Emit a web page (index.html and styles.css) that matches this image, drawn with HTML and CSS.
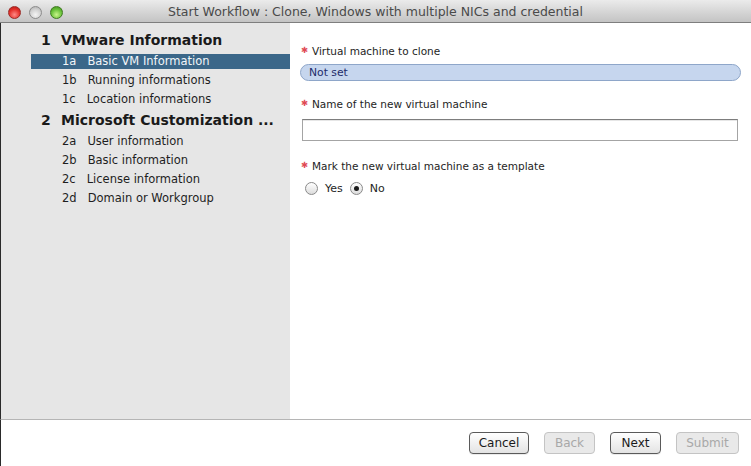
FILE: index.html
```html
<!DOCTYPE html>
<html>
<head>
<meta charset="utf-8">
<link rel="stylesheet" href="styles.css">
</head>
<body>
<div class="window">
  <div class="titlebar">
    <div class="lights">
      <span class="light red"></span>
      <span class="light gray"></span>
      <span class="light green"></span>
    </div>
    <div class="title">Start Workflow : Clone, Windows with multiple NICs and credential</div>
  </div>
  <div class="main">
    <div class="sidebar">
      <div class="steps">
        <div class="step"><span class="snum">1</span>VMware Information</div>
        <div class="sub selected"><span class="num">1a</span>Basic VM Information</div>
        <div class="sub"><span class="num">1b</span>Running informations</div>
        <div class="sub"><span class="num">1c</span>Location informations</div>
        <div class="step"><span class="snum">2</span>Microsoft Customization ...</div>
        <div class="sub"><span class="num">2a</span>User information</div>
        <div class="sub"><span class="num">2b</span>Basic information</div>
        <div class="sub"><span class="num">2c</span>License information</div>
        <div class="sub"><span class="num">2d</span>Domain or Workgroup</div>
      </div>
    </div>
    <div class="content">
      <div class="label"><span class="req">✱</span>Virtual machine to clone</div>
      <div class="pill">Not set</div>
      <div class="label l2"><span class="req">✱</span>Name of the new virtual machine</div>
      <div class="input"></div>
      <div class="label l3"><span class="req">✱</span>Mark the new virtual machine as a template</div>
      <div class="radios">
        <span class="radio"></span><span class="rlabel">Yes</span>
        <span class="radio checked"></span><span class="rlabel">No</span>
      </div>
    </div>
  </div>
  <div class="footer">
    <button class="btn cancel">Cancel</button>
    <button class="btn back disabled">Back</button>
    <button class="btn next">Next</button>
    <button class="btn submit disabled">Submit</button>
  </div>
</div>
</body>
</html>
```

FILE: styles.css
```css
html, body {
  margin: 0;
  padding: 0;
  background: #ffffff;
}
body {
  font-family: "DejaVu Sans", "Liberation Sans", sans-serif;
  color: #1e1e1e;
}
.window {
  width: 751px;
  height: 466px;
  display: flex;
  flex-direction: column;
  overflow: hidden;
}
.titlebar {
  height: 22px;
  flex: none;
  position: relative;
  background: linear-gradient(#ebebeb, #d3d3d3 60%, #c4c4c4);
  border-bottom: 1px solid #7e7e7e;
  display: flex;
  align-items: center;
}
.lights {
  display: flex;
  gap: 8px;
  padding-left: 8px;
  padding-top: 2px;
}
.light {
  width: 13px;
  height: 13px;
  border-radius: 50%;
  box-sizing: border-box;
}
.light.red {
  background: radial-gradient(circle at 50% 70%, #ff8b86 0%, #e5322c 55%, #b0150f 100%);
  border: 1px solid #9c2a26;
}
.light.gray {
  background: radial-gradient(circle at 50% 70%, #f4f4f4 0%, #d2d2d2 55%, #a9a9a9 100%);
  border: 1px solid #8c8c8c;
}
.light.green {
  background: radial-gradient(circle at 50% 70%, #c9f58a 0%, #6ac23b 55%, #3b8a17 100%);
  border: 1px solid #3f7b21;
}
.title {
  position: absolute;
  left: 0;
  right: 0;
  top: 0;
  height: 22px;
  line-height: 24px;
  text-align: center;
  font-size: 12.5px;
  color: #4a4a4a;
  pointer-events: none;
}
.main {
  flex: 1;
  display: flex;
  min-height: 0;
}
.sidebar {
  width: 289px;
  flex: none;
  background: #e6e6e6;
  border-left: 1px solid #2a2a2a;
  padding-top: 8px;
  box-sizing: content-box;
}
.steps {
  margin-left: 30px;
}
.step {
  height: 19px;
  line-height: 19px;
  padding-left: 10px;
  font-size: 14px;
  font-weight: bold;
  color: #1a1a1a;
  white-space: nowrap;
  margin-top: 4px;
}
.step:first-child {
  margin-top: 0;
}
.snum {
  display: inline-block;
  width: 20px;
}
.sub {
  height: 15px;
  line-height: 15px;
  margin-top: 4px;
  padding-left: 31px;
  font-size: 11.5px;
  color: #1e1e1e;
  white-space: nowrap;
}
.sub .num {
  margin-right: 11px;
}
.sub.selected {
  background: #3b6789;
  color: #f2f5f8;
}
.content {
  flex: 1;
  padding: 21px 10px 0 10px;
  background: #ffffff;
}
.label {
  height: 14px;
  line-height: 14px;
  font-size: 10.5px;
  color: #1e1e1e;
  white-space: nowrap;
  display: flex;
  align-items: center;
}
.req {
  color: #e04a55;
  font-size: 8.5px;
  width: 8px;
  margin-right: 3px;
  margin-left: 1px;
  position: relative;
  top: -1px;
}
.pill {
  margin-top: 6px;
  height: 17px;
  box-sizing: border-box;
  border: 1px solid #8ea6c9;
  border-radius: 9px;
  background: #c6d6ee;
  color: #1f2d6b;
  font-size: 10.8px;
  line-height: 15px;
  padding-left: 8px;
}
.l2 {
  margin-top: 16px;
}
.input {
  margin: 8px 3px 0 2px;
  height: 22px;
  box-sizing: border-box;
  border: 1px solid #a4a4a4;
  border-top-color: #7d7d7d;
  background: #ffffff;
  box-shadow: inset 0 1px 0 #e6e6e6;
}
.l3 {
  margin-top: 18px;
}
.radios {
  margin-top: 8px;
  height: 14px;
  display: flex;
  align-items: center;
  padding-left: 5px;
  font-size: 11px;
}
.radio {
  width: 13px;
  height: 13px;
  box-sizing: border-box;
  border-radius: 50%;
  border: 1px solid #8a8a8a;
  background: linear-gradient(#ffffff, #dcdcdc);
  position: relative;
}
.radio.checked::after {
  content: "";
  position: absolute;
  left: 3px;
  top: 3px;
  width: 5px;
  height: 5px;
  border-radius: 50%;
  background: #1a1a1a;
}
.rlabel {
  margin-left: 7px;
  margin-right: 7px;
}
.footer {
  height: 47px;
  flex: none;
  border-top: 1px solid #b5b5b5;
  border-left: 1px solid #2a2a2a;
  background: #ffffff;
  display: flex;
  justify-content: flex-end;
  align-items: flex-start;
  gap: 15px;
  padding: 12px 12px 0 0;
  box-sizing: border-box;
}
.btn {
  height: 22px;
  box-sizing: border-box;
  border: 1px solid #5a5a5a;
  border-radius: 4px;
  background: linear-gradient(#ffffff, #f1f1f1 50%, #e3e3e3);
  font-family: "DejaVu Sans", "Liberation Sans", sans-serif;
  font-size: 12px;
  color: #1a1a1a;
  padding: 0;
  box-shadow: 0 1px 0 rgba(0,0,0,0.08);
}
.btn.cancel { width: 60px; }
.btn.back { width: 51px; }
.btn.next { width: 51px; }
.btn.submit { width: 63px; }
.btn.disabled {
  border-color: #c4c4c4;
  background: #e9e9e9;
  color: #a8a8a8;
  box-shadow: none;
}
```
